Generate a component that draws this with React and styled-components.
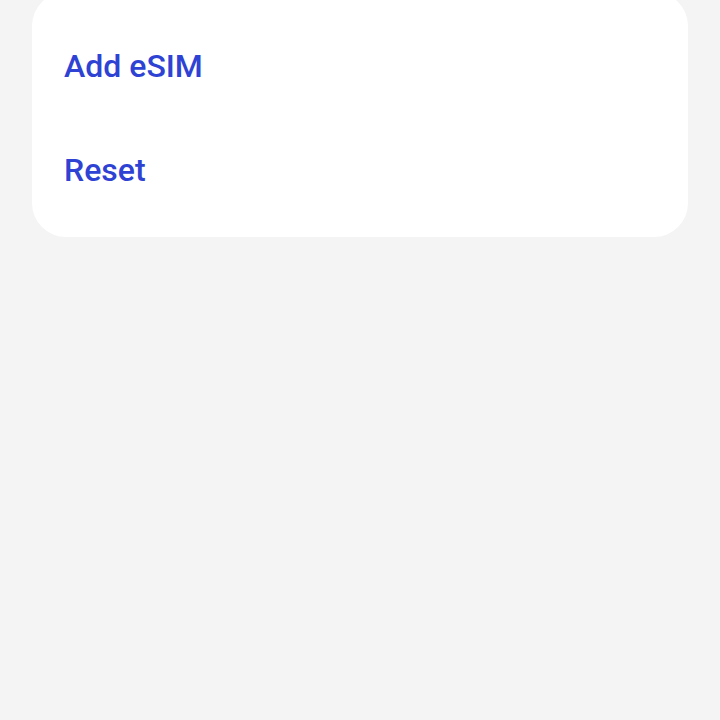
import React from "react";
import styled, { createGlobalStyle } from "styled-components";

const Global = createGlobalStyle`
  html, body { margin: 0; padding: 0; background: #f4f4f4; }
  body { font-family: Roboto, "Noto Sans", sans-serif; }
`;

const Page = styled.div`
  min-height: 720px;
  padding: 0 32px;
  background: #f4f4f4;
  overflow: hidden;
`;

const Card = styled.div`
  margin-top: -8px;
  background: #ffffff;
  border-radius: 34px;
  padding: 22px 0 15px;
  display: flex;
  flex-direction: column;
`;

const Row = styled.div`
  height: 104px;
  display: flex;
  align-items: center;
  padding: 0 32px;
  font-size: 32px;
  font-weight: 500;
  color: #2e42d4;
`;

export default function App() {
  return (
    <>
      <Global />
      <Page>
        <Card>
          <Row>Add eSIM</Row>
          <Row>Reset</Row>
        </Card>
      </Page>
    </>
  );
}
